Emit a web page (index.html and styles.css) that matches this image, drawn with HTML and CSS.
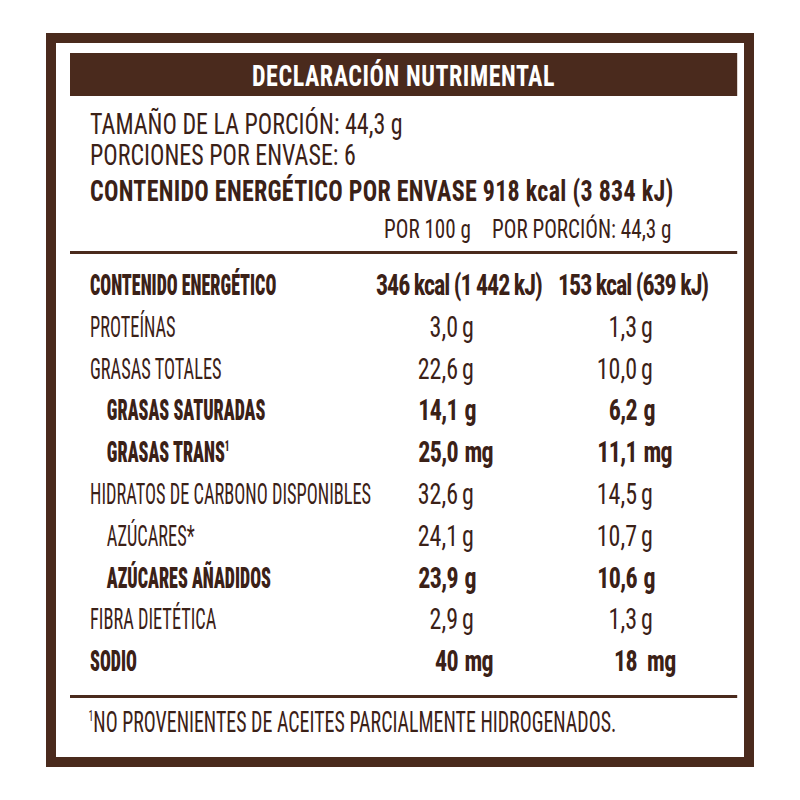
FILE: index.html
```html
<!DOCTYPE html>
<html lang="es">
<head>
<meta charset="utf-8">
<title>Declaración nutrimental</title>
<link rel="stylesheet" href="styles.css">
</head>
<body>
<div class="label-box">
  <div class="panel">
    <div class="title">DECLARACIÓN NUTRIMENTAL</div>
    <div class="info">
      <p class="info-line">TAMAÑO DE LA PORCIÓN: 44,3 g</p>
      <p class="info-line">PORCIONES POR ENVASE: 6</p>
      <p class="info-line energy">CONTENIDO ENERGÉTICO POR ENVASE 918 kcal (3 834 kJ)</p>
      <p class="info-line cols"><span class="col-a">POR 100 g</span><span class="col-b">POR PORCIÓN: 44,3 g</span></p>
    </div>
    <hr class="rule">
    <div class="table">
      <div class="row strong kcal">
        <span class="name heavy"><span class="txt">CONTENIDO ENERGÉTICO</span></span>
        <span class="v1">346 kcal (1 442 kJ)</span>
        <span class="v2">153 kcal (639 kJ)</span>
      </div>
      <div class="row">
        <span class="name"><span class="txt">PROTEÍNAS</span></span>
        <span class="v1"><span class="num">3,0</span><span class="unit">g</span></span>
        <span class="v2"><span class="num">1,3</span><span class="unit">g</span></span>
      </div>
      <div class="row">
        <span class="name"><span class="txt">GRASAS TOTALES</span></span>
        <span class="v1"><span class="num">22,6</span><span class="unit">g</span></span>
        <span class="v2"><span class="num">10,0</span><span class="unit">g</span></span>
      </div>
      <div class="row strong">
        <span class="name heavy indent"><span class="txt">GRASAS SATURADAS</span></span>
        <span class="v1"><span class="num">14,1</span><span class="unit">g</span></span>
        <span class="v2"><span class="num">6,2</span><span class="unit">g</span></span>
      </div>
      <div class="row strong">
        <span class="name heavy indent"><span class="txt">GRASAS TRANS<span class="sup">1</span></span></span>
        <span class="v1"><span class="num">25,0</span><span class="unit">mg</span></span>
        <span class="v2"><span class="num">11,1</span><span class="unit">mg</span></span>
      </div>
      <div class="row">
        <span class="name"><span class="txt">HIDRATOS DE CARBONO DISPONIBLES</span></span>
        <span class="v1"><span class="num">32,6</span><span class="unit">g</span></span>
        <span class="v2"><span class="num">14,5</span><span class="unit">g</span></span>
      </div>
      <div class="row">
        <span class="name indent"><span class="txt">AZÚCARES*</span></span>
        <span class="v1"><span class="num">24,1</span><span class="unit">g</span></span>
        <span class="v2"><span class="num">10,7</span><span class="unit">g</span></span>
      </div>
      <div class="row strong">
        <span class="name heavy indent"><span class="txt">AZÚCARES AÑADIDOS</span></span>
        <span class="v1"><span class="num">23,9</span><span class="unit">g</span></span>
        <span class="v2"><span class="num">10,6</span><span class="unit">g</span></span>
      </div>
      <div class="row">
        <span class="name"><span class="txt">FIBRA DIETÉTICA</span></span>
        <span class="v1"><span class="num">2,9</span><span class="unit">g</span></span>
        <span class="v2"><span class="num">1,3</span><span class="unit">g</span></span>
      </div>
      <div class="row strong">
        <span class="name heavy"><span class="txt">SODIO</span></span>
        <span class="v1"><span class="num">40</span><span class="unit">mg</span></span>
        <span class="v2"><span class="num">18</span><span class="unit wide">mg</span></span>
      </div>
    </div>
    <hr class="rule rule-bottom">
    <p class="note"><span class="txt"><span class="sup">1</span>NO PROVENIENTES DE ACEITES PARCIALMENTE HIDROGENADOS.</span></p>
  </div>
</div>
</body>
</html>
```
FILE: styles.css
```css
html, body {
  margin: 0;
  padding: 0;
  background: #ffffff;
}

.label-box {
  margin: 33px 0 0 46px;
  width: 708px;
  height: 734px;
  box-sizing: border-box;
  border: 10px solid #4a2a1d;
  padding: 10px 6px 0 14px;
  overflow: hidden;
  background: #ffffff;
}

/* Condensed type: Roboto at its narrowest width, compressed a little further */
.panel {
  width: 833.75px;
  transform: scaleX(0.8);
  transform-origin: 0 0;
  font-family: Roboto, "Liberation Sans", sans-serif;
  font-stretch: 75%;
  font-size: 30px;
  font-weight: 400;
  color: #3b2117;
}

.title {
  height: 40px;
  padding-top: 3px;
  line-height: 40px;
  background: #4a2a1d;
  color: #ffffff;
  text-align: center;
  font-weight: 700;
  letter-spacing: 0.7px;
}

.info {
  padding: 12px 0 0 25px;
}

.info-line {
  margin: 0;
  line-height: 31px;
  white-space: nowrap;
}

.energy {
  line-height: 41px;
  font-weight: 700;
  letter-spacing: 0.35px;
}

.cols {
  line-height: 37px;
  font-size: 26.4px;
  padding-left: 367.5px;
}

.col-a {
  display: inline-block;
  width: 135px;
}

.rule {
  border: 0;
  height: 3px;
  margin: 3px 0 0;
  background: #4a2a1d;
}

.rule-bottom {
  margin-top: 13px;
}

.table {
  padding-top: 10px;
}

.row {
  display: flex;
  height: 41.8px;
  line-height: 41.8px;
  white-space: nowrap;
}

.name {
  width: 382.5px;
  flex: none;
  box-sizing: border-box;
  padding-left: 25px;
}

.name.indent {
  padding-left: 46.25px;
}

/* the nutrient names use an even narrower cut of the type */
.txt {
  display: inline-block;
  font-weight: 450;
  transform: scaleX(0.765);
  transform-origin: 0 50%;
}

.heavy .txt {
  font-weight: 900;
  transform: scaleX(0.75);
}

.strong .v1,
.strong .v2 {
  font-weight: 700;
  letter-spacing: -0.8px;
}

.kcal .v1,
.kcal .v2 {
  letter-spacing: -1.3px;
}

.v1 {
  width: 227.5px;
  flex: none;
}

.v2 {
  flex: 1;
}

.num {
  display: inline-block;
  text-align: right;
}

.v1 .num {
  width: 102.5px;
}

.v2 .num {
  width: 98.75px;
}

.unit {
  margin-left: 5px;
}

.strong .unit {
  margin-left: 8px;
}

.strong .unit.wide {
  margin-left: 12.5px;
}

.sup {
  font-size: 0.5em;
  vertical-align: 0.75em;
  line-height: 0;
  letter-spacing: 0;
}

.note {
  margin: 7px 0 0;
  padding-left: 22.5px;
  line-height: 34px;
  white-space: nowrap;
}

.note .txt {
  transform: scaleX(0.83);
}
```
